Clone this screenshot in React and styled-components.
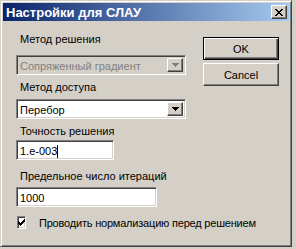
import React from 'react';
import styled, { createGlobalStyle } from 'styled-components';

const GlobalStyle = createGlobalStyle`
  html, body {
    margin: 0;
    padding: 0;
    background: #d4d0c8;
  }
  body {
    font-family: "Liberation Sans", Arial, sans-serif;
    font-size: 11px;
    color: #000;
  }
`;

const Window = styled.div`
  width: 292px;
  height: 247px;
  box-sizing: border-box;
  padding: 2px;
  background: #d4d0c8;
  border: 1px solid;
  border-color: #d4d0c8 #404040 #404040 #d4d0c8;
  box-shadow: inset 1px 1px #fff, inset -1px -1px #808080;
  display: flex;
  flex-direction: column;
`;

const TitleBar = styled.div`
  height: 18px;
  display: flex;
  align-items: center;
  justify-content: space-between;
  padding: 0 2px 0 3px;
  background: linear-gradient(to right, #0a246a, #a6caf0);
`;

const Title = styled.span`
  color: #fff;
  font-weight: 700;
  font-size: 13px;
`;

const raised = `
  border: 1px solid;
  border-color: #fff #404040 #404040 #fff;
  box-shadow: inset -1px -1px #808080;
  background: #d4d0c8;
  box-sizing: border-box;
`;

const sunken = `
  border: 1px solid;
  border-color: #808080 #fff #fff #808080;
  box-shadow: inset 1px 1px #404040, inset -1px -1px #d4d0c8;
  box-sizing: border-box;
`;

const CloseButton = styled.div`
  ${raised}
  width: 16px;
  height: 14px;
  display: flex;
  align-items: center;
  justify-content: center;
`;

const Body = styled.div`
  flex: 1;
  display: flex;
  gap: 17px;
  padding: 12px 0 0 13px;
`;

const LeftColumn = styled.div`
  width: 170px;
  display: flex;
  flex-direction: column;
`;

const RightColumn = styled.div`
  display: flex;
  flex-direction: column;
  gap: 3px;
  padding-top: 4px;
`;

const Label = styled.div`
  height: 13px;
  line-height: 13px;
  padding-left: 4px;
  margin-bottom: ${p => p.$gap}px;
`;

const Combo = styled.div`
  ${sunken}
  width: 170px;
  height: 20px;
  display: flex;
  align-items: stretch;
  padding: 2px;
  background: ${p => (p.$disabled ? '#d4d0c8' : '#fff')};
  color: ${p => (p.$disabled ? '#808080' : '#000')};
  margin-bottom: ${p => p.$gap}px;
`;

const ComboText = styled.div`
  flex: 1;
  line-height: 16px;
  padding-left: 1px;
`;

const DropButton = styled.div`
  ${raised}
  width: 16px;
  display: flex;
  align-items: center;
  justify-content: center;
`;

const Edit = styled.div`
  ${sunken}
  width: ${p => p.$width}px;
  height: 20px;
  background: #fff;
  padding: 2px 3px;
  line-height: 16px;
  display: flex;
  margin-bottom: ${p => p.$gap}px;
`;

const Caret = styled.span`
  width: 1px;
  height: 13px;
  margin-top: 2px;
  background: #000;
`;

const CheckRow = styled.label`
  display: flex;
  align-items: center;
  gap: 13px;
  padding-left: 1px;
  white-space: nowrap;
  letter-spacing: -0.2px;
`;

const CheckBox = styled.div`
  ${sunken}
  width: 13px;
  height: 13px;
  background: #fff;
  display: flex;
  align-items: center;
  justify-content: center;
`;

const Button = styled.div`
  width: 76px;
  height: 23px;
  box-sizing: border-box;
  display: flex;
  align-items: center;
  justify-content: center;
  background: #d4d0c8;
  border: 1px solid;
  border-color: ${p => (p.$default ? '#000' : '#fff #404040 #404040 #fff')};
  box-shadow: ${p =>
    p.$default
      ? 'inset 1px 1px #fff, inset -1px -1px #404040, inset -2px -2px #808080'
      : 'inset -1px -1px #808080'};
`;

const Arrow = ({ color }) => (
  <svg width="7" height="4" viewBox="0 0 7 4">
    <path d="M0 0h7L3.5 4z" fill={color} shapeRendering="crispEdges" />
  </svg>
);

const ComboBox = ({ value, disabled, gap }) => (
  <Combo $disabled={disabled} $gap={gap}>
    <ComboText>{value}</ComboText>
    <DropButton>
      <Arrow color={disabled ? '#808080' : '#000'} />
    </DropButton>
  </Combo>
);

export default function App() {
  return (
    <>
      <GlobalStyle />
      <Window>
        <TitleBar>
          <Title>Настройки для СЛАУ</Title>
          <CloseButton>
            <svg width="8" height="7" viewBox="0 0 8 7" shapeRendering="crispEdges">
              <path d="M0 0h2v1h1v1h2V1h1V0h2v1H7v1H6v1H5v1h1v1h1v1h1v1H6V6H5V5H3v1H2v1H0V6h1V5h1V4h1V3H2V2H1V1H0z" fill="#000" />
            </svg>
          </CloseButton>
        </TitleBar>
        <Body>
          <LeftColumn>
            <Label $gap={9}>Метод решения</Label>
            <ComboBox value="Сопряженный градиент" disabled gap={6} />
            <Label $gap={5}>Метод доступа</Label>
            <ComboBox value="Перебор" gap={6} />
            <Label $gap={2}>Точность решения</Label>
            <Edit $width={98} $gap={10}>
              1.e-003
              <Caret />
            </Edit>
            <Label $gap={4}>Предельное число итераций</Label>
            <Edit $width={141} $gap={9}>1000</Edit>
            <CheckRow>
              <CheckBox>
                <svg width="7" height="7" viewBox="0 0 7 7" shapeRendering="crispEdges">
                  <path d="M6 0h1v3H6v1H5v1H4v1H3v1H2V6H1V5H0V2h1v1h1v1h1V3h1V2h1V1h1z" fill="#000" />
                </svg>
              </CheckBox>
              Проводить нормализацию перед решением
            </CheckRow>
          </LeftColumn>
          <RightColumn>
            <Button $default>OK</Button>
            <Button>Cancel</Button>
          </RightColumn>
        </Body>
      </Window>
    </>
  );
}
